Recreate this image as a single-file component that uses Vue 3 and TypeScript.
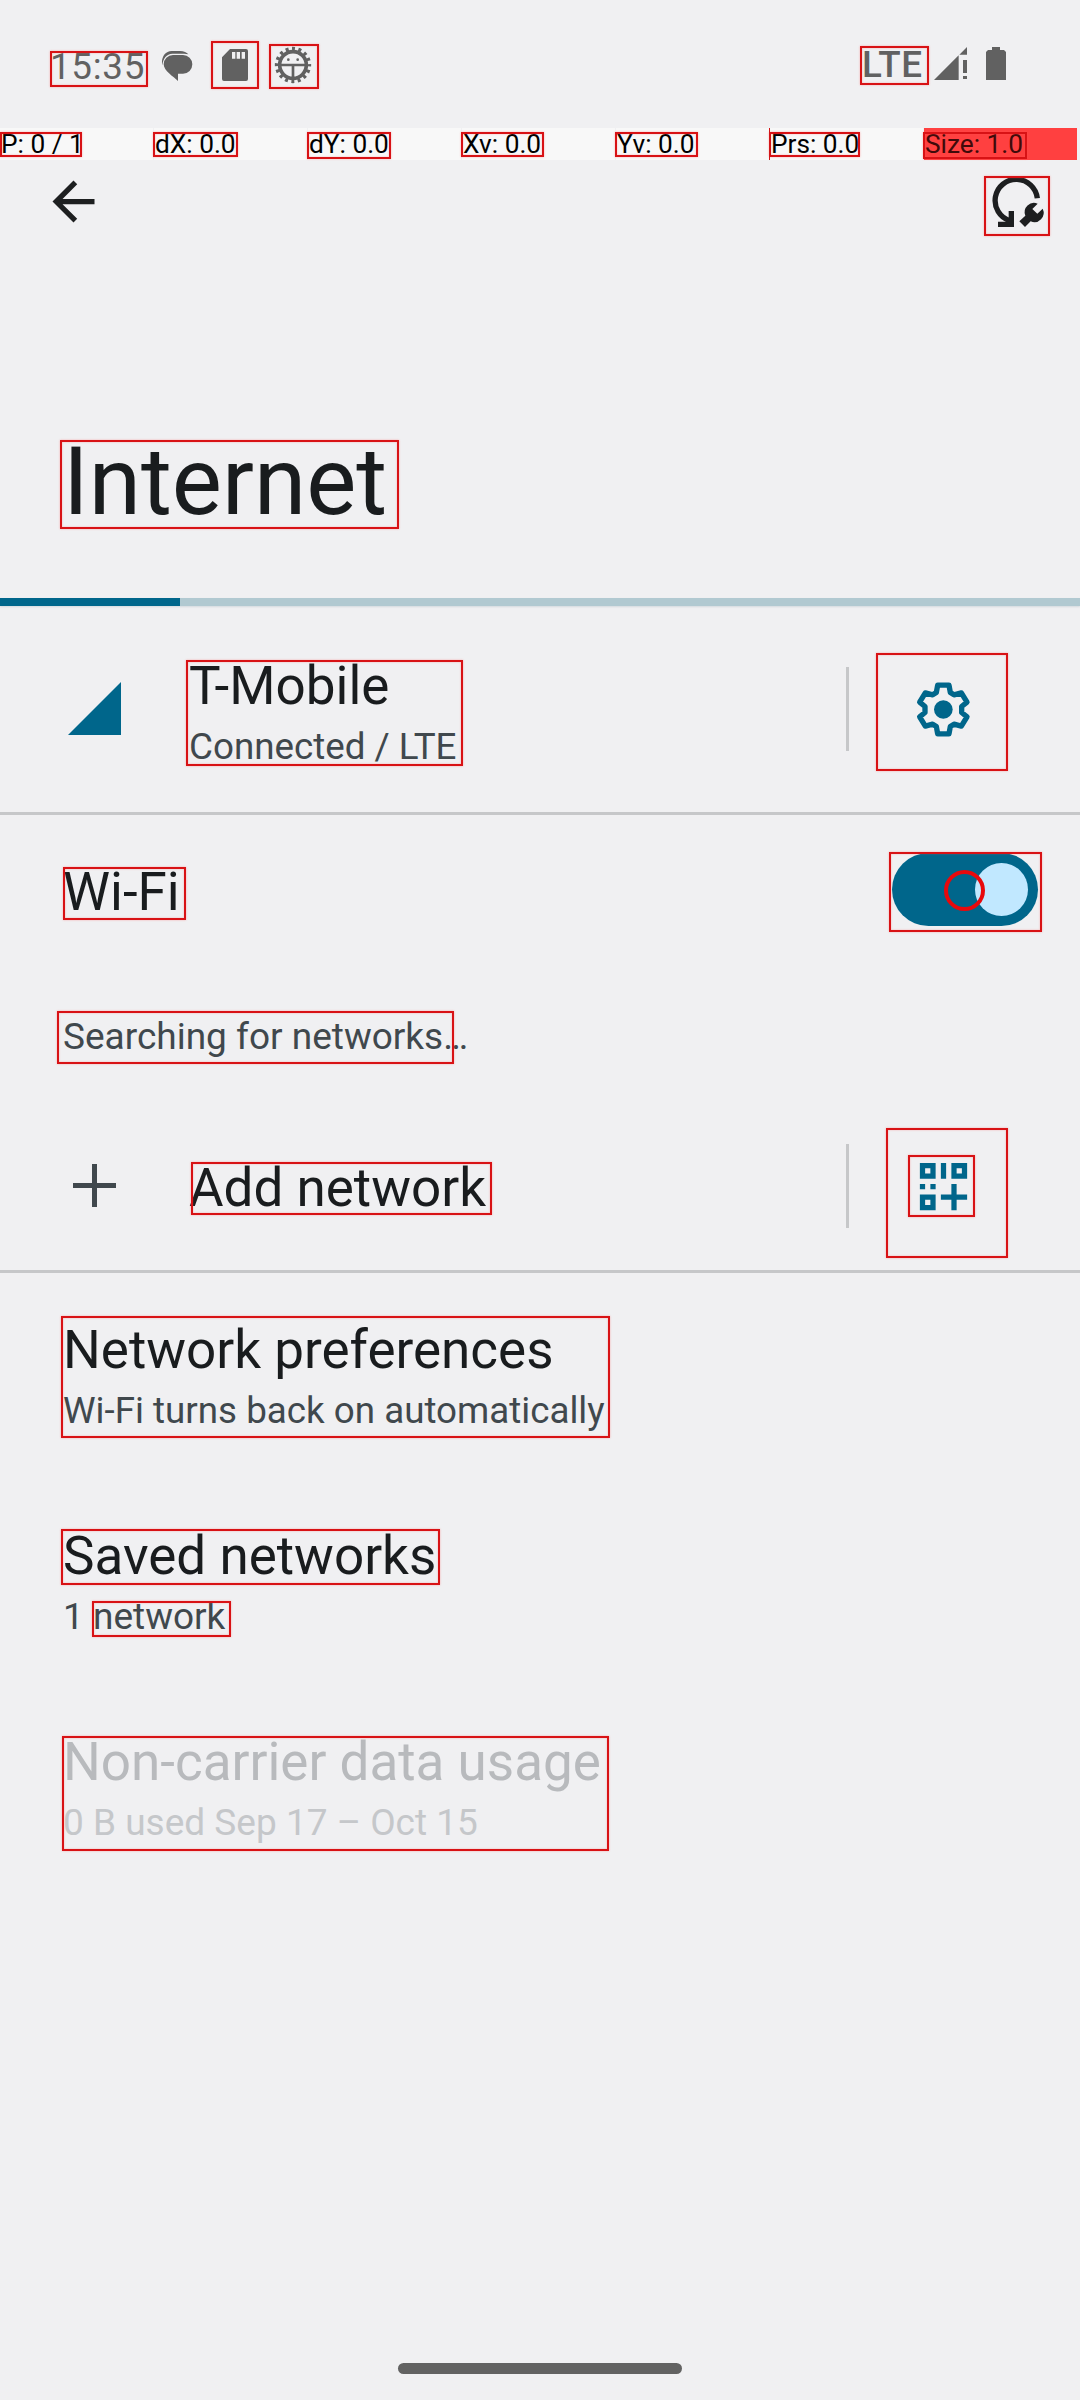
<script setup lang="ts">
interface Cell { label: string; hot?: boolean }
interface Box { x: number; y: number; w: number; h: number }
interface Pref { title: string; summary: string; disabled?: boolean; long?: boolean }

const cells: Cell[] = [
  { label: 'P: 0 / 1' },
  { label: 'dX: 0.0' },
  { label: 'dY: 0.0' },
  { label: 'Xv: 0.0' },
  { label: 'Yv: 0.0' },
  { label: 'Prs: 0.0' },
  { label: 'Size: 1.0', hot: true },
]

const prefs: Pref[] = [
  { title: 'Network preferences', summary: 'Wi-Fi turns back on automatically', long: true },
  { title: 'Saved networks', summary: '1 network' },
  { title: 'Non-carrier data usage', summary: '0 B used Sep 17 – Oct 15', disabled: true },
]

// Element bounds highlighted over the screen: left, top, right, bottom
const bounds: number[][] = [
  [50, 51, 148, 87], [211, 41, 259, 89], [269, 44, 319, 89], [860, 46, 929, 85],
  [0, 132, 82, 157], [153, 132, 238, 157], [307, 132, 391, 159], [461, 132, 544, 157],
  [615, 132, 698, 157], [769, 132, 860, 157], [923, 132, 1027, 159],
  [984, 176, 1050, 236], [60, 440, 399, 529], [186, 660, 463, 766], [876, 653, 1008, 771],
  [63, 867, 186, 920], [889, 852, 1042, 932], [57, 1011, 454, 1064], [191, 1162, 492, 1215],
  [886, 1128, 1008, 1258], [908, 1155, 975, 1217], [61, 1316, 610, 1438],
  [61, 1529, 440, 1585], [92, 1601, 231, 1637], [62, 1736, 609, 1851],
]
const boxes: Box[] = bounds.map(([l, t, r, b]) => ({ x: l, y: t, w: r - l, h: b - t }))
</script>

<template>
  <div class="screen">
    <header class="status">
      <span class="clock">15:35</span>
      <svg class="msg" viewBox="483 90 96 96">
        <path d="M519 105H549A28 28 0 0 1 549 161H534V183C520 170 491 152 491 133A28 28 0 0 1 519 105Z" />
        <path d="M487 136C482 115 494 93 515 93H540C552 93 560 97 565 103C556 101 550 101 540 101H517C500 102 489 115 487 136Z" />
      </svg>
      <svg class="sd" viewBox="666 87 78 96">
        <path fill-rule="evenodd" d="M690 87H738q6 0 6 6V177q0 6-6 6H672q-6 0-6-6V112ZM696 96V116H706V96ZM710 96V116H720V96ZM725 96V116H735V96Z" />
      </svg>
      <svg class="bug" viewBox="822 77 114 114">
        <g fill="none" stroke="#616161">
          <circle cx="879" cy="134" r="40" stroke-width="11" />
          <circle cx="879" cy="134" r="49" stroke-width="11" stroke-dasharray="9 10.24" stroke-dashoffset="4.5" />
          <path d="M842 134H916M879 134V172" stroke-width="8" />
        </g>
        <circle cx="865" cy="118" r="4" />
        <circle cx="893" cy="118" r="4" />
      </svg>
      <span class="spacer"></span>
      <span class="lte">LTE</span>
      <svg class="signal" viewBox="462 81 99 99">
        <path d="M462 180L536 106V180ZM538 104L561 81V104ZM549 120H561V159H549ZM549 168H561V177H549Z" />
      </svg>
      <svg class="battery" viewBox="618 81 60 99">
        <path d="M636 81H660V90H672L678 96V180H618V96L624 90H636Z" />
      </svg>
    </header>

    <div class="pointer">
      <span v-for="c in cells" :key="c.label" class="cell" :class="{ hot: c.hot }">{{ c.label }}</span>
    </div>

    <div class="toolbar">
      <svg class="back" viewBox="0 0 24 24">
        <path d="M20 11H7.83l5.59-5.59L12 4l-8 8 8 8 1.41-1.41L7.83 13H20v-2z" />
      </svg>
      <svg class="reset" viewBox="630 462 168 168">
        <path d="M772 535A63.5 63.5 0 1 0 689 602" fill="none" stroke="#1d1f20" stroke-width="16" />
        <path d="M686 573H702V621H654V605H676L686 596Z" />
        <path d="M773 551A28 28 0 0 0 736 587L718 604L735 621L752 604A28 28 0 0 0 788 566L772 581L757 567Z" />
      </svg>
    </div>

    <h1>Internet</h1>
    <div class="progress"><div class="bar"></div></div>

    <section class="row carrier">
      <div class="icon">
        <svg class="tri" viewBox="0 0 53 53"><path d="M0 53L53 0V53Z" /></svg>
      </div>
      <div class="text">
        <div class="title">T-Mobile</div>
        <div class="summary long">Connected / LTE</div>
      </div>
      <div class="side">
        <svg viewBox="276 143.5 189 189">
          <path
            d="M353 165H387L391 187L402 194L424 188L441 216L425 229V247L441 260L424 288L402 282L391 289L387 311H353L349 289L338 282L316 288L299 260L315 247V229L299 216L316 188L338 194L349 187Z"
            fill="none" stroke="#00668b" stroke-width="16" stroke-linejoin="round" />
          <circle cx="370" cy="238" r="28" />
        </svg>
      </div>
    </section>
    <div class="rule"></div>

    <section class="row wifi">
      <div class="text"><div class="title">Wi-Fi</div></div>
      <div class="switch"><div class="thumb"></div></div>
    </section>

    <section class="searching">
      <div class="summary">Searching for networks…</div>
    </section>

    <section class="row add">
      <div class="icon">
        <svg class="plus" viewBox="0 0 43 43"><path d="M19 0H24V19H43V24H24V43H19V24H0V19H19Z" /></svg>
      </div>
      <div class="text"><div class="title">Add network</div></div>
      <div class="side">
        <svg viewBox="0 0 24 24">
          <path
            fill-rule="evenodd"
            d="M3 3H9V9H3ZM5 5V7H7V5ZM11 3H13V9H11ZM15 3H21V9H15ZM17 5V7H19V5ZM3 11H5V13H3ZM7 11H9V13H7ZM3 15H9V21H3ZM5 17V19H7V17ZM15 11H17V15H21V17H17V21H15V17H11V15H15Z" />
        </svg>
      </div>
    </section>
    <div class="rule"></div>

    <section v-for="p in prefs" :key="p.title" class="pref" :class="{ disabled: p.disabled }">
      <div class="title">{{ p.title }}</div>
      <div class="summary" :class="{ long: p.long }">{{ p.summary }}</div>
    </section>

    <footer class="nav"><div class="pill"></div></footer>

    <div
      v-for="(b, i) in boxes" :key="i" class="box"
      :style="{ left: b.x + 'px', top: b.y + 'px', width: b.w + 'px', height: b.h + 'px' }"></div>
    <div class="tick"></div>
    <div class="touch"></div>
  </div>
</template>

<style>
body {
  margin: 0;
  background: #f0f0f2;
}
</style>

<style scoped>
.screen {
  position: relative;
  display: flex;
  flex-direction: column;
  width: 1080px;
  height: 2400px;
  overflow: hidden;
  background: #f0f0f2;
  font-family: Roboto, "Liberation Sans", sans-serif;
  color: #191c1e;
}
.screen > * { flex-shrink: 0; }
svg { display: block; flex: none; }

.status {
  display: flex;
  align-items: flex-start;
  height: 128px;
  fill: #616161;
  color: #616161;
}
.clock {
  width: 111px;
  padding: 45px 0 0 50px;
  font-size: 36.75px;
  line-height: 44px;
  letter-spacing: 0.7px;
}
.msg { width: 32px; height: 32px; margin-top: 50px; }
.sd { width: 26px; height: 32px; margin: 49px 0 0 29px; }
.bug { width: 38px; height: 38px; margin: 45.7px 0 0 26px; }
.spacer { flex: 1; }
.lte {
  width: 72px;
  padding-top: 43px;
  font-size: 36.75px;
  line-height: 44px;
  font-weight: 500;
  letter-spacing: 0.8px;
}
.signal { width: 33px; height: 33px; margin-top: 47px; }
.battery { width: 20px; height: 33px; margin: 47px 74px 0 19px; }

.pointer {
  display: flex;
  gap: 1px;
  height: 32px;
}
.cell {
  box-sizing: border-box;
  width: 153px;
  padding-left: 1px;
  background: #f8f8f8;
  color: #000;
  font-size: 26.25px;
  line-height: 32px;
}
.cell.hot { background: #ff4040; color: #400a0a; }

.toolbar {
  display: flex;
  justify-content: space-between;
  align-items: center;
  height: 84px;
  padding: 0 34px 0 42px;
  fill: #1d1f20;
}
.back { width: 63px; height: 63px; margin-bottom: 1px; }
.reset { width: 56px; height: 56px; }

h1 {
  margin: 182px 0 60px 63px;
  font-size: 94.5px;
  line-height: 112px;
  font-weight: 400;
}
.progress { height: 8px; background: #b1c9d1; box-shadow: 0 1px 2px rgba(0, 60, 80, 0.12); }
.bar { width: 180px; height: 8px; background: #00668b; }

.row { display: flex; align-items: center; padding-left: 63px; }
.carrier { height: 206px; }
.wifi { height: 149px; padding-right: 42px; }
.add { height: 168px; }
.icon { width: 126px; }
.tri { width: 53px; height: 53px; margin: 0 0 1px 5px; fill: #00668b; }
.plus { width: 43px; height: 43px; margin: 0 0 1px 10px; fill: #40484d; }
.text { flex: 1; padding-top: 4px; }
.title { font-size: 53px; line-height: 70px; white-space: nowrap; }
.summary {
  padding-top: 1px;
  font-size: 37px;
  line-height: 50px;
  color: #40484d;
  white-space: nowrap;
}
.summary.long { font-size: 36.75px; }
.side {
  display: flex;
  align-items: center;
  box-sizing: border-box;
  width: 234px;
  height: 84px;
  padding-left: 63px;
  border-left: 3px solid #c6c7c9;
  fill: #00668b;
}
.side svg { width: 63px; height: 63px; }
.rule { height: 3px; background: #c6c7c9; }

.switch {
  display: flex;
  align-items: center;
  justify-content: flex-end;
  box-sizing: border-box;
  width: 146px;
  height: 73px;
  padding-right: 10px;
  border-radius: 37px;
  background: #00668b;
}
.thumb { width: 53px; height: 53px; border-radius: 50%; background: #c1e8ff; }

.searching { box-sizing: border-box; height: 138px; padding: 47px 0 0 63px; }

.pref { box-sizing: border-box; height: 206px; padding: 42px 0 0 63px; }
.disabled .title { color: #b8babd; }
.disabled .summary { color: #c5c7ca; }

.nav { display: flex; justify-content: center; margin-top: auto; height: 37px; }
.pill { width: 284px; height: 11px; border-radius: 6px; background: #626262; }

.box {
  position: absolute;
  box-sizing: border-box;
  border: 2px solid #d81215;
  box-shadow: 0 0 2px rgba(255, 90, 90, 0.45), inset 0 0 2px rgba(255, 90, 90, 0.45);
}
.tick {
  position: absolute;
  left: 769px;
  top: 128px;
  width: 1px;
  height: 32px;
  background: #d31518;
}
.touch {
  position: absolute;
  left: 944px;
  top: 870px;
  box-sizing: border-box;
  width: 41px;
  height: 41px;
  border: 4px solid #e8090c;
  border-radius: 50%;
}
</style>
